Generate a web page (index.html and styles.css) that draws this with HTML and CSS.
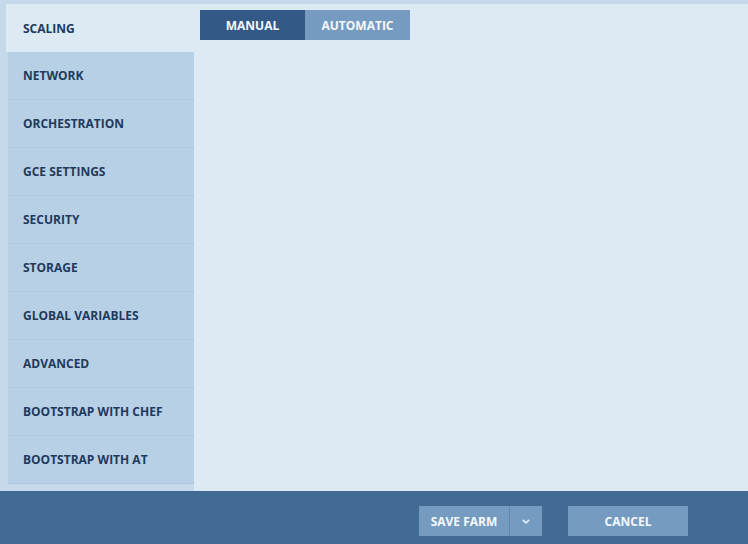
FILE: index.html
```html
<!DOCTYPE html>
<html>
<head>
<meta charset="utf-8">
<link rel="stylesheet" href="styles.css">
</head>
<body>
<div class="page">
  <div class="main">
    <nav class="sidebar">
      <div class="item active">SCALING</div>
      <div class="item">NETWORK</div>
      <div class="item">ORCHESTRATION</div>
      <div class="item">GCE SETTINGS</div>
      <div class="item">SECURITY</div>
      <div class="item">STORAGE</div>
      <div class="item">GLOBAL VARIABLES</div>
      <div class="item">ADVANCED</div>
      <div class="item">BOOTSTRAP WITH CHEF</div>
      <div class="item">BOOTSTRAP WITH AT</div>
    </nav>
    <section class="content">
      <div class="tabs">
        <div class="tab tab-on">MANUAL</div>
        <div class="tab">AUTOMATIC</div>
      </div>
    </section>
  </div>
  <footer class="footer">
    <div class="split">
      <div class="btn save">SAVE FARM</div>
      <div class="btn caret">
        <svg width="8" height="5" viewBox="0 0 8 5"><path d="M0.8 0.8 L4 3.8 L7.2 0.8" fill="none" stroke="#e6eef6" stroke-width="1.6"/></svg>
      </div>
    </div>
    <div class="btn cancel">CANCEL</div>
  </footer>
</div>
</body>
</html>
```

FILE: styles.css
```css
* { box-sizing: border-box; }
html, body { margin: 0; padding: 0; }
body {
  background: #c5d9ea;
  font-family: "Open Sans", "Liberation Sans", sans-serif;
  font-weight: 700;
  font-size: 12px;
}
.page {
  width: 748px;
  height: 544px;
  display: flex;
  flex-direction: column;
  padding-top: 4px;
}
.main {
  display: flex;
  height: 487px;
}
.sidebar {
  width: 194px;
  display: flex;
  flex-direction: column;
}
.item {
  height: 48px;
  margin-left: 8px;
  padding-left: 15px;
  display: flex;
  align-items: center;
  background: #b8d0e5;
  border-bottom: 1px solid #a9c7e0;
  color: #1e3a5c;
}
.item.active {
  margin-left: 6px;
  padding-left: 17px;
  background: #dde9f3;
  border-bottom: none;
}
.content {
  flex: 1;
  background: #dde9f3;
  padding: 6px 0 0 6px;
}
.tabs {
  display: flex;
}
.tab {
  width: 105px;
  height: 30px;
  display: flex;
  align-items: center;
  justify-content: center;
  background: #759cc0;
  color: #f4f8fb;
}
.tab-on {
  background: #335a86;
}
.footer {
  flex: 1;
  background: #416b93;
  display: flex;
  padding: 15px 0 0 419px;
  gap: 26px;
  align-items: flex-start;
}
.split {
  display: flex;
  gap: 1px;
  background: #6189b0;
}
.btn {
  height: 30px;
  display: flex;
  align-items: center;
  justify-content: center;
  background: #759cc0;
  color: #f4f8fb;
}
.save { width: 90px; }
.caret { width: 32px; }
.cancel { width: 120px; }
```
